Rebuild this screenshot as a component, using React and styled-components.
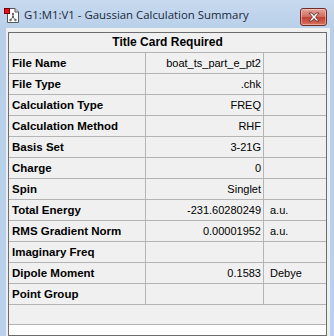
import React from 'react';
import styled, { createGlobalStyle } from 'styled-components';

const rows = [
  { label: 'File Name', value: 'boat_ts_part_e_pt2', unit: '' },
  { label: 'File Type', value: '.chk', unit: '' },
  { label: 'Calculation Type', value: 'FREQ', unit: '' },
  { label: 'Calculation Method', value: 'RHF', unit: '' },
  { label: 'Basis Set', value: '3-21G', unit: '' },
  { label: 'Charge', value: '0', unit: '' },
  { label: 'Spin', value: 'Singlet', unit: '' },
  { label: 'Total Energy', value: '-231.60280249', unit: 'a.u.' },
  { label: 'RMS Gradient Norm', value: '0.00001952', unit: 'a.u.' },
  { label: 'Imaginary Freq', value: '', unit: '' },
  { label: 'Dipole Moment', value: '0.1583', unit: 'Debye' },
  { label: 'Point Group', value: '', unit: '' }
];

const App = () => (
  <Frame>
    <GlobalStyle />
    <TitleBar>
      <AppIcon />
      <Caption>G1:M1:V1 - Gaussian Calculation Summary</Caption>
      <CloseButton>
        <svg width="14" height="10" viewBox="0 0 14 10">
          <path
            d="M2 1 L5 1 L7 3.5 L9 1 L12 1 L8.6 5 L12 9 L9 9 L7 6.5 L5 9 L2 9 L5.4 5 Z"
            fill="#fff"
            stroke="#5a2020"
            strokeWidth="0.8"
            strokeLinejoin="round"
          />
        </svg>
      </CloseButton>
    </TitleBar>

    <Client>
      <Table>
        <Heading>Title Card Required</Heading>
        {rows.map(row => (
          <Row key={row.label}>
            <Label>{row.label}</Label>
            <Value>{row.value}</Value>
            <Unit>{row.unit}</Unit>
          </Row>
        ))}
        <Filler />
        <Blank />
      </Table>
    </Client>
  </Frame>
);

const AppIcon = () => (
  <svg width="17" height="17" viewBox="0 0 17 17">
    <path d="M3.5 2.5 H11 L14.5 6 V16.5 H3.5 Z" fill="#fff" stroke="#555" />
    <path d="M11 2.5 V6 H14.5" fill="#ddd" stroke="#555" />
    <line x1="9" y1="8" x2="9" y2="11" stroke="#777" />
    <line x1="9" y1="11" x2="6.5" y2="14" stroke="#777" />
    <line x1="9" y1="11" x2="11.5" y2="14" stroke="#777" />
    <circle cx="9" cy="8" r="1.2" fill="#666" />
    <circle cx="9" cy="11" r="1.2" fill="#666" />
    <circle cx="6.5" cy="14" r="1.2" fill="#666" />
    <circle cx="11.5" cy="14" r="1.2" fill="#666" />
    <rect x="0.5" y="2.5" width="5" height="5" fill="#e8101a" stroke="#7a0000" />
  </svg>
);

const GlobalStyle = createGlobalStyle`
  html, body {
    margin: 0;
    padding: 0;
    width: 334px;
    height: 336px;
    overflow: hidden;
    background: #c1d5ec;
  }
`;

const Frame = styled.div`
  display: flex;
  flex-direction: column;
  width: 334px;
  height: 336px;
  overflow: hidden;
  background: linear-gradient(#c6d9ef, #b9cfe9 30px, #b9d1ec);
  font-family: 'Liberation Sans', Arial, sans-serif;
`;

const TitleBar = styled.div`
  flex-shrink: 0;
  display: flex;
  align-items: center;
  height: 28px;
  padding: 0 7px 0 4px;
  box-sizing: border-box;
`;

const Caption = styled.span`
  flex: 1;
  margin-left: 3px;
  font-family: 'Open Sans', 'Liberation Sans', sans-serif;
  font-size: 11.4px;
  color: #1a2a3c;
  white-space: nowrap;
`;

const CloseButton = styled.div`
  align-self: flex-start;
  display: flex;
  align-items: center;
  justify-content: center;
  width: 25px;
  height: 16px;
  margin-top: 8px;
  border: 1px solid #6e2b28;
  border-radius: 3px;
  background: linear-gradient(#e3a69c, #d1685c 50%, #c0402f 51%, #d4735f);
  box-shadow: inset 0 0 0 1px rgba(255, 220, 210, 0.5);
`;

const Client = styled.div`
  flex: 1;
  min-height: 0;
  overflow: hidden;
  margin: 0 4px 0 6px;
  padding: 4px 0 0 1px;
  background: #f0f0f0;
  border-left: 1px solid #e8eef6;
`;

const Table = styled.div`
  width: 319px;
  box-sizing: border-box;
  border: 1px solid #6c6c6c;
  background: #f0f0f0;
  color: #000;
  font-size: 11px;
`;

const Heading = styled.div`
  height: 19px;
  line-height: 19px;
  text-align: center;
  font-weight: bold;
  font-size: 12px;
  border-bottom: 1px solid #b4b4b4;
`;

const Row = styled.div`
  display: grid;
  grid-template-columns: 137px 118px 1fr;
  height: 21px;
  box-sizing: border-box;
  border-bottom: 1px solid #b4b4b4;
`;

const Cell = styled.div`
  line-height: 20px;
  white-space: nowrap;
  overflow: hidden;
`;

const Label = styled(Cell)`
  padding-left: 3px;
  font-weight: bold;
  font-size: 11.5px;
  border-right: 1px solid #b4b4b4;
`;

const Value = styled(Cell)`
  padding-right: 2px;
  text-align: right;
  border-right: 1px solid #b4b4b4;
`;

const Unit = styled(Cell)`
  padding-left: 6px;
`;

const Filler = styled.div`
  height: 19px;
  border-bottom: 1px solid #b4b4b4;
`;

const Blank = styled.div`
  height: 10px;
  background: #fff;
`;

export default App;
